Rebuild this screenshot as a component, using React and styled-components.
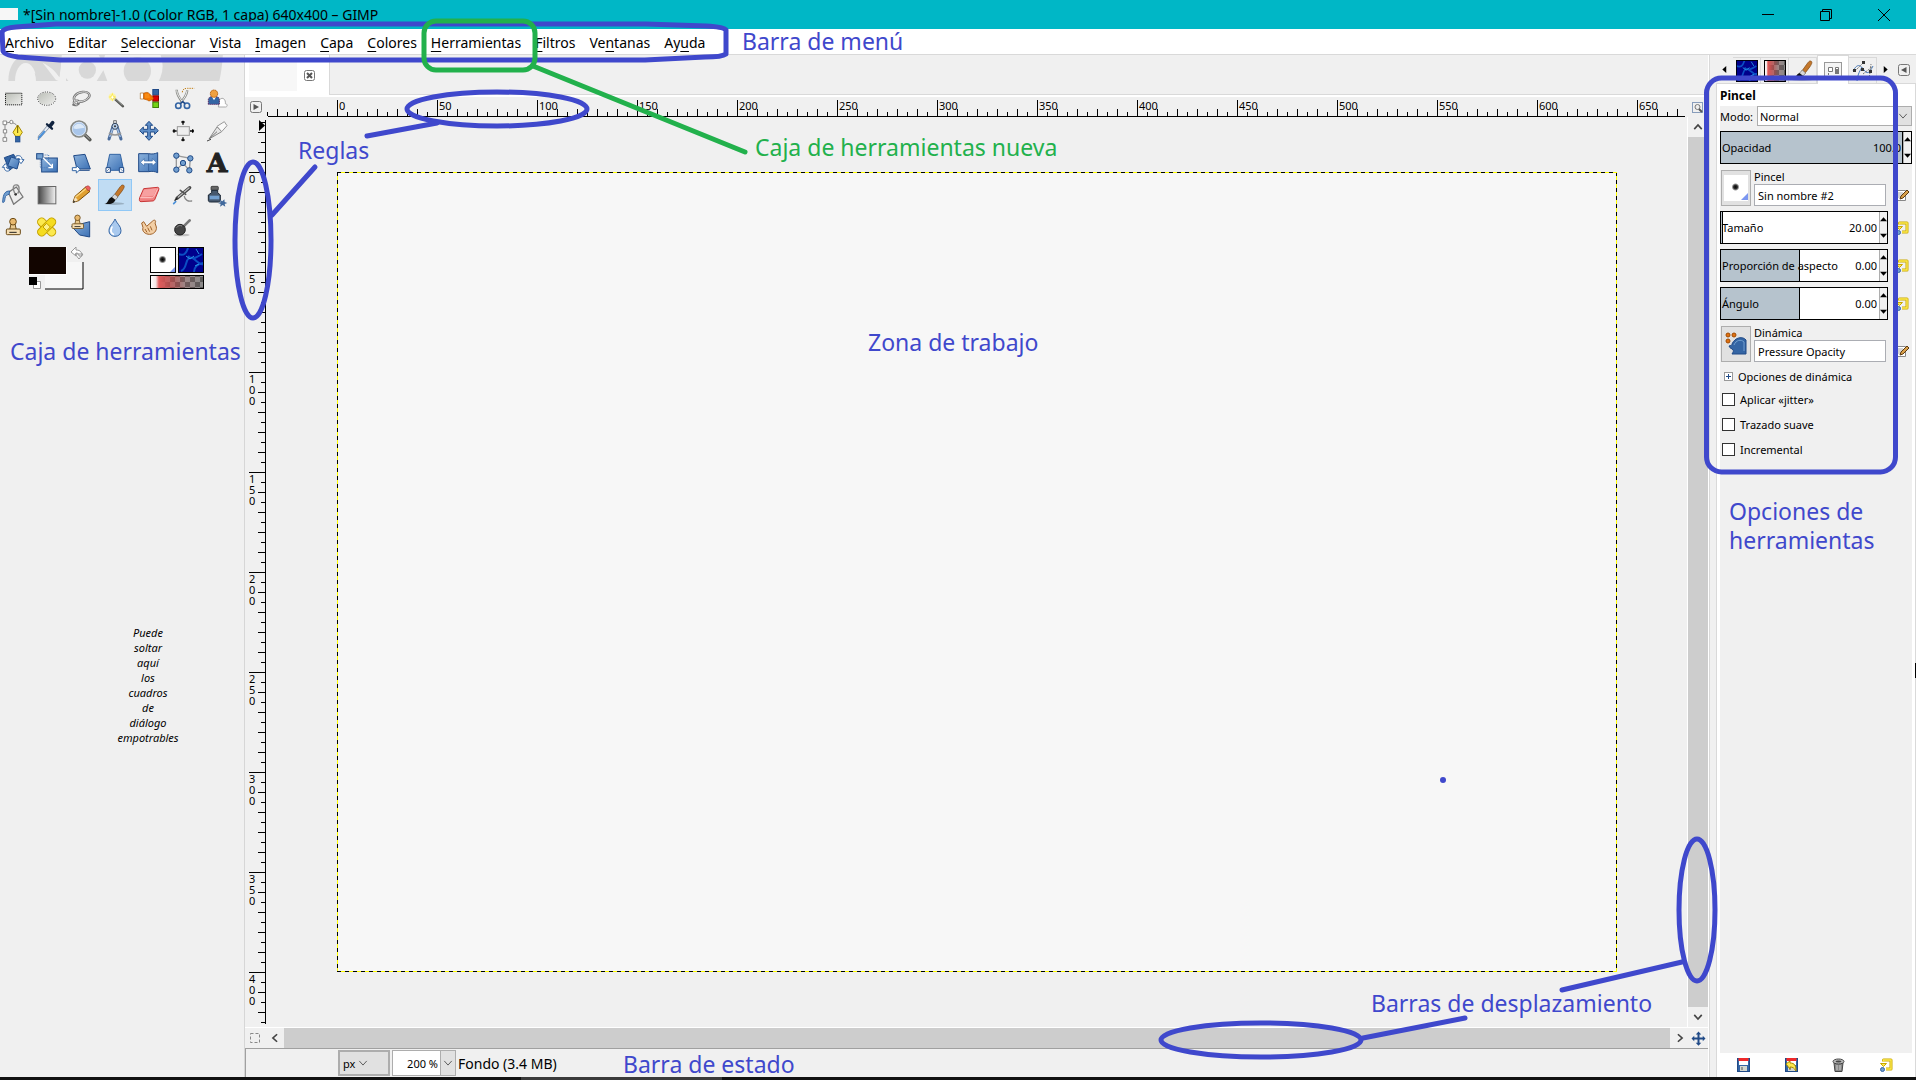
import React from "react";
import styled, { createGlobalStyle, css } from "styled-components";

const GlobalStyle = createGlobalStyle`
  *, *::before, *::after { box-sizing: border-box; }
  body { margin: 0; background: #f0f0f0; }
  button, input, select { font: inherit; color: inherit; margin: 0; border-radius: 0; }
`;

const ui = `"Noto Sans", "Open Sans", sans-serif`;
const blue = "#3f48cc";
const green = "#22b14c";

const Page = styled.div`
  position: relative;
  display: flex;
  flex-direction: column;
  min-height: 100vh;
  overflow: hidden;
  background: #f0f0f0;
  color: #000;
  font: 11px/15px ${ui};
`;

const plainButton = css`
  display: flex;
  align-items: center;
  justify-content: center;
  padding: 0;
  border: 0;
  background: none;
`;

/* ---------- title and menu ---------- */

const TitleBar = styled.header`
  display: flex;
  align-items: center;
  height: 29px;
  padding-right: 3px;
  background: #00b7c6;
`;
const TitleThumb = styled.span`
  align-self: flex-end;
  width: 18px;
  height: 12px;
  margin: 0 5px 9px 0;
  background: #f7f7f7;
`;
const TitleText = styled.h1`
  flex: 1;
  margin: 0;
  font-size: 14px;
  line-height: 20px;
  font-weight: 400;
`;
const WindowButton = styled.button`
  ${plainButton}
  width: 58px;
  height: 29px;
`;
const MenuBar = styled.nav`
  display: flex;
  height: 26px;
  background: #fff;
  border-bottom: 1px solid #d9d9d9;
`;
const MenuButton = styled.button`
  ${plainButton}
  padding: 2px 7px 0 7px;
  font-size: 14px;
  line-height: 20px;
  &:first-child { padding-left: 5px; }
  u { text-underline-offset: 3px; text-decoration-thickness: 1px; text-decoration-skip-ink: none; }
`;

/* ---------- columns ---------- */

const Main = styled.main`
  flex: 1;
  display: grid;
  grid-template-columns: 245px minmax(0, 1fr) 208px;
`;

const Toolbox = styled.aside`
  display: flex;
  flex-direction: column;
  border-right: 1px solid #d6d6d6;
  svg { display: block; }
`;
const ToolGrid = styled.div`
  display: grid;
  grid-template-columns: repeat(7, 34px);
  grid-auto-rows: 32px;
  margin: 2px 0 4px -4px;
`;
const ToolButton = styled.button`
  ${plainButton}
  border: 1px solid ${(p) => (p.$active ? "#90c8f6" : "transparent")};
  background: ${(p) => (p.$active ? "#c0dcf3" : "none")};
  svg { overflow: visible; }
`;
const SwatchRow = styled.div`
  display: flex;
  justify-content: space-between;
  padding: 0 40px 0 29px;
`;
const DropHint = styled.p`
  align-self: center;
  margin: 334px 0 0 52px;
  text-align: center;
  font-style: italic;
  white-space: pre-line;
`;

/* ---------- image window ---------- */

const Editor = styled.section`
  display: flex;
  flex-direction: column;
`;
const TabStrip = styled.div`
  display: flex;
  height: 42px;
  border-bottom: 2px solid #fff;
`;
const ImageTab = styled.div`
  display: flex;
  align-items: flex-start;
  gap: 7px;
  width: 85px;
  padding: 7px 0 0 4px;
  background: #fff;
  border-right: 1px solid #d9d9d9;
`;
const TabThumb = styled.span`
  width: 48px;
  height: 29px;
  background: #f7f7f7;
`;
const TabClose = styled.button`
  ${plainButton}
  margin-top: 8px;
`;
const TabRest = styled.div`
  flex: 1;
  border-bottom: 1px solid #d9d9d9;
`;
const RulerRow = styled.div`
  display: grid;
  grid-template-columns: 21px minmax(0, 1fr) 21px;
  height: 20px;
`;
const CornerButton = styled.button`
  ${plainButton}
`;
const Ruler = styled.svg`
  display: block;
  width: 100%;
  height: 100%;
  overflow: hidden;
  font: 11px ${ui};
`;
const Body = styled.div`
  flex: 1;
  display: grid;
  grid-template-columns: 21px minmax(0, 1fr) 21px;
`;
const Viewport = styled.div`
  overflow: hidden;
  padding: 55px 0 55px 71px;
`;
const Canvas = styled.div`
  width: 1280px;
  height: 800px;
  background-color: #f7f7f7;
  background-image:
    repeating-linear-gradient(90deg, #000 0 4px, #ff0 4px 8px),
    repeating-linear-gradient(90deg, #000 0 4px, #ff0 4px 8px),
    repeating-linear-gradient(180deg, #000 0 4px, #ff0 4px 8px),
    repeating-linear-gradient(180deg, #000 0 4px, #ff0 4px 8px);
  background-size: 100% 1px, 100% 1px, 1px 100%, 1px 100%;
  background-position: 0 0, 0 100%, 0 0, 100% 0;
  background-repeat: no-repeat;
`;
const VScroll = styled.div`
  display: flex;
  flex-direction: column;
  border-left: 1px solid #fff;
`;
const HScroll = styled.div`
  display: flex;
  height: 21px;
  border-top: 1px solid #fff;
`;
const ScrollThumb = styled.div`
  flex: 1;
  background: #cdcdcd;
`;
const ScrollButton = styled.button`
  ${plainButton}
  min-width: 19px;
  min-height: 20px;
  &:first-child { min-width: 20px; }
`;
const StatusBar = styled.footer`
  display: flex;
  align-items: center;
  gap: 2px;
  height: 29px;
  padding-left: 92px;
  border: solid #a0a0a0;
  border-width: 1px 0 0 1px;
`;
const StatusText = styled.span`
  padding-top: 1px;
  font-size: 14px;
  line-height: 20px;
`;
const BottomEdge = styled.div`
  height: 3px;
  background: linear-gradient(90deg, #111 521px, #3a3a3a 521px 722px, #111 722px);
`;

/* ---------- form parts ---------- */

const Combo = styled.span`
  display: grid;
  grid-template-columns: minmax(0, 1fr) ${(p) => (p.$flat ? "30px" : p.$cell)};
  width: ${(p) => p.$width};
  flex: ${(p) => (p.$width ? "none" : 1)};
  height: ${(p) => p.$height};
  border: ${(p) => (p.$thick ? 2 : 1)}px solid #adadad;
  background: ${(p) => (p.$flat ? "#e1e1e1" : "#fff")};
  select {
    grid-area: 1 / 1 / 2 / 3;
    width: 100%;
    appearance: none;
    border: 0;
    padding: 0 ${(p) => (p.$right ? "17px" : "2px")} 0 ${(p) => (p.$flat ? "3px" : "2px")};
    background: none;
    text-align: ${(p) => (p.$right ? "right" : "left")};
    text-align-last: ${(p) => (p.$right ? "right" : "left")};
  }
`;
const ComboArrow = styled.span`
  grid-area: 1 / 2;
  display: flex;
  align-items: center;
  justify-content: ${(p) => (p.$flat ? "flex-start" : "center")};
  background: #e1e1e1;
  border-left: ${(p) => (p.$flat ? 0 : 1)}px solid #adadad;
  pointer-events: none;
`;
const Entry = styled.input`
  width: 100%;
  height: 22px;
  padding: 0 3px;
  border: 1px solid #abadb3;
  background: #fff;
`;

/* ---------- dock ---------- */

const Dock = styled.aside`
  display: grid;
  grid-template-columns: 8px minmax(0, 1fr);
`;
const Seam = styled.div`
  border-left: 1px solid #fff;
  box-shadow: inset 1px 0 #d9d9d9;
`;
const DockBook = styled.div`
  display: flex;
  flex-direction: column;
`;
const DockTabs = styled.div`
  display: flex;
  height: 29px;
`;
const DockTab = styled.button`
  ${plainButton}
  width: ${(p) => (p.$active ? 32 : 28)}px;
  margin-top: ${(p) => (p.$active ? 0 : 2)}px;
  border: solid #d9d9d9;
  border-width: 1px 1px ${(p) => (p.$active ? 0 : 1)}px ${(p) => (p.$active ? 1 : 0)}px;
  background: ${(p) => (p.$active ? "#fff" : "#f0f0f0")};
`;
const DockArrow = styled.button`
  ${plainButton}
  width: 17px;
  padding-top: 1px;
  border-bottom: 1px solid #d9d9d9;
`;
const DockMenuButton = styled(DockArrow)`
  flex: 1;
  justify-content: flex-end;
  padding-right: 6px;
`;
const DockPage = styled.div`
  flex: 1;
  display: flex;
  flex-direction: column;
  padding: 0 3px;
  background: #fff;
  border: solid #d9d9d9;
  border-width: 0 1px;
`;
const DockTitle = styled.h2`
  margin: 0;
  padding-top: 1px;
  font-size: 12px;
  line-height: 21px;
  height: 22px;
`;
const Options = styled.form`
  flex: 1;
  display: flex;
  flex-direction: column;
  gap: 5px;
  background: #f0f0f0;
`;
const ModeRow = styled.div`
  display: flex;
  align-items: center;
  gap: 4px;
`;
const OptionRow = styled.div`
  display: flex;
  align-items: ${(p) => (p.$end ? "flex-end" : "center")};
`;
const SideButton = styled.button`
  ${plainButton}
  width: 24px;
  height: 22px;
  padding-left: 4px;
`;
const Scale = styled.div`
  flex: 1;
  display: flex;
  align-items: center;
  min-width: 0;
  height: 33px;
  padding-left: 1px;
  border: 1px solid #000;
  background: linear-gradient(90deg, #b6c3cd ${(p) => p.$fill}, #000 ${(p) => p.$fill}, #000 calc(${(p) => p.$fill} + 1px), #fff calc(${(p) => p.$fill} + 1px));
  label { flex: 1; white-space: nowrap; }
  input {
    width: 38px;
    border: 0;
    padding: 0 2px 0 0;
    background: none;
    text-align: right;
  }
`;
const Spinner = styled.span`
  display: flex;
  flex-direction: column;
  justify-content: space-between;
  align-self: stretch;
  width: 8px;
  background: #f0f0f0;
  border-left: 1px solid #adadad;
`;
const SpinButton = styled.button`
  ${plainButton}
  height: 15px;
`;
const ResourceButton = styled.button`
  ${plainButton}
  width: 30px;
  height: 36px;
  margin: 0 3px 0 1px;
  border: 1px solid #adadad;
  background: #e1e1e1;
`;
const ResourceField = styled.label`
  flex: 1;
  min-width: 0;
  padding-right: 2px;
  span { display: block; }
`;
const Expander = styled.button`
  ${plainButton}
  justify-content: flex-start;
  gap: 5px;
  height: 18px;
  padding-left: 4px;
`;
const Checks = styled.div`
  display: flex;
  flex-direction: column;
  margin-top: -3px;
`;
const Check = styled.label`
  display: flex;
  align-items: center;
  gap: 5px;
  height: 25px;
  padding-left: 2px;
  input {
    width: 13px;
    height: 13px;
    appearance: none;
    border: 1px solid #333;
    background: #fff;
  }
`;
const DockActions = styled.div`
  display: grid;
  grid-template-columns: repeat(4, 1fr);
  height: 24px;
  padding-right: 2px;
`;
const ActionButton = styled.button`
  ${plainButton}
`;

/* ---------- annotations ---------- */

const Markup = styled.svg`
  position: absolute;
  inset: 0;
  width: 100%;
  height: 100%;
  pointer-events: none;
`;
const Note = styled.p`
  position: absolute;
  left: ${(p) => p.$x}px;
  top: ${(p) => p.$y}px;
  margin: 0;
  font-size: 23px;
  line-height: 29px;
  color: ${(p) => p.$color || blue};
  white-space: pre;
`;

const HiddenDefs = styled.svg`
  position: absolute;
`;

/* ---------- tool drawings, 72-unit box ---------- */

const B = "#3465a4";
const BL = "#729fcf";
const BD = "#204a87";

const Defs = () => (
  <HiddenDefs width="0" height="0" aria-hidden="true">
    <defs>
      <linearGradient id="blueFace" x1="0" y1="0" x2="1" y2="1">
        <stop offset="0" stopColor="#8db3dd" />
        <stop offset="1" stopColor="#3b70b4" />
      </linearGradient>
      <linearGradient id="greyFace" x1="0" y1="0" x2="1" y2="1">
        <stop offset="0" stopColor="#babdb6" />
        <stop offset="1" stopColor="#eeeeec" />
      </linearGradient>
      <linearGradient id="blend" x1="0" y1="0" x2="1" y2="0">
        <stop offset="0" stopColor="#444" />
        <stop offset="1" stopColor="#f4f4f4" />
      </linearGradient>
      <linearGradient id="redFade" x1="0" y1="0" x2="1" y2="0">
        <stop offset="0" stopColor="#fff" />
        <stop offset="0.1" stopColor="#f4e4e4" />
        <stop offset="0.16" stopColor="#e05a5a" />
        <stop offset="0.65" stopColor="#c02020" stopOpacity="0.15" />
        <stop offset="1" stopColor="#000" stopOpacity="0.1" />
      </linearGradient>
      <radialGradient id="softDot">
        <stop offset="0" stopColor="#000" />
        <stop offset="0.5" stopColor="#333" />
        <stop offset="1" stopColor="#fff" />
      </radialGradient>
      <pattern id="checks" width="10" height="10" patternUnits="userSpaceOnUse">
        <rect width="10" height="10" fill="#999" />
        <path d="M0 0h5v5H0zM5 5h5v5H5z" fill="#666" />
      </pattern>
    </defs>
  </HiddenDefs>
);

const Stamp = () => (
  <g stroke="#6b4a16" strokeWidth="3" strokeLinejoin="round">
    <path d="M30 27l-4 17h20l-4-17z" fill="#e9c98f" />
    <circle cx="36" cy="20" r="10" fill="#e9b96e" />
    <rect x="16" y="42" width="42" height="17" rx="3" fill="#f5deb3" />
    <path d="M25 52h22" stroke="#222" />
  </g>
);

const BrushArt = () => (
  <g>
    <ellipse cx="34" cy="62" rx="30" ry="4" fill="#000" opacity=".2" />
    <path d="M60 6c6 2 4 8-2 17L42 44 33 37 48 16c5-7 8-11 12-10z" fill="#c4782c" stroke="#7a4510" strokeWidth="2" />
    <path d="M35 33l10 9-8 9-11-8z" fill="#d8d8d8" stroke="#666" strokeWidth="2" />
    <path d="M26 42l11 9c-4 12-18 13-30 12 9-4 8-17 19-21z" fill="#111" />
  </g>
);

const tools = [
  ["Selección rectangular", <rect x="13.5" y="18.5" width="49" height="35" fill="url(#greyFace)" stroke="#000" strokeWidth="3" strokeDasharray="3 3" />],
  ["Selección elíptica", <g strokeWidth="3"><ellipse cx="35" cy="35" rx="27" ry="20" fill="url(#greyFace)" stroke="#fff" /><ellipse cx="35" cy="35" rx="27" ry="20" fill="none" stroke="#222" strokeDasharray="3 4" /></g>],
  ["Selección libre", <g fill="none" strokeLinecap="round"><path d="M24 54c-8 0-12-8-7-11 5-4 14-2 13 4-1 5-10 9-17 6M17 42C9 31 22 17 40 15s27 8 18 18c-6 7-19 12-31 11" stroke="#777" strokeWidth="7" /><path d="M24 54c-8 0-12-8-7-11 5-4 14-2 13 4M17 42C9 31 22 17 40 15s27 8 18 18c-6 7-19 12-31 11" stroke="#ddd" strokeWidth="3" /></g>],
  ["Selección difusa", <g><path d="M31 32l29 26" stroke="#555753" strokeWidth="7" strokeLinecap="round" /><path d="M33 32l25 23" stroke="#aaa" strokeWidth="2" /><circle cx="28" cy="30" r="11" fill="#fff59a" opacity=".8" /><path d="M28 16l3 10 9 4-9 4-3 10-3-10-9-4 9-4z" fill="#fce94f" /><path d="M28 24l2 5 5 1-5 2-2 5-2-5-5-2 5-1z" fill="#fff" /></g>],
  ["Selección por color", <g strokeWidth="3"><rect x="47.5" y="7.5" width="17" height="16" fill={B} stroke={BD} /><rect x="47.5" y="26.5" width="17" height="16" fill="#e00000" stroke="#800" /><rect x="47.5" y="45.5" width="17" height="16" fill="#73d216" stroke="#3f8006" /><path d="M10 18h10v18H10z" fill="#fff" stroke="#a66a2a" strokeWidth="2" /><path d="M20 19c6-4 14-4 18 2l10 10c3 5-1 9-6 8-3 4-9 3-11 0L20 36z" fill="#f57900" stroke="#b35400" strokeWidth="2" /><path d="M24 24h12M24 30h14" stroke="#fcaf3e" strokeWidth="2" /></g>],
  ["Tijeras inteligentes", <g fill="none"><path d="M17 8c0 14 8 26 18 38M49 10C47 24 40 34 29 46" stroke="#888a85" strokeWidth="7" /><path d="M17 10c1 12 9 24 17 34M48 12c-2 12-8 22-17 32" stroke="#eee" strokeWidth="3" /><ellipse cx="22" cy="56" rx="8" ry="8" stroke={B} strokeWidth="5" /><ellipse cx="48" cy="56" rx="8" ry="8" stroke={B} strokeWidth="5" /><path d="M28 50l7-6 7 6" stroke={BD} strokeWidth="5" /><path d="M34 16c0-10 8-12 16-12h20" stroke="#c17d11" strokeWidth="3" strokeDasharray="4 3" /></g>],
  ["Selección del primer plano", <g strokeWidth="3"><path d="M40 60h22c6 0 6-10-1-10 2-12-8-22-17-12z" fill="#fff" stroke="#aaa" /><path d="M10 52V38c0-6 5-9 11-9h12c6 0 10 3 10 9v14z" fill={B} stroke="#5a2c66" strokeDasharray="4 2" /><path d="M21 30l6 10 6-10z" fill="#fff" stroke="none" /><circle cx="27" cy="20" r="11" fill="#f0a040" stroke="#b35400" strokeDasharray="4 2" /></g>],
  ["Rutas", <g><path d="M12 12v52M12 12c18-4 34 0 38 12" fill="none" stroke="#888" strokeWidth="3" /><path d="M6 6h11v11H6zM7 32h10v10H7zM6 56h11v11H6z" fill="#fff" stroke="#888" strokeWidth="3" /><circle cx="31" cy="9" r="5" fill="#fff" stroke="#888" strokeWidth="3" /><path d="M50 18L36 40l8 12h12l8-12z" fill="#fce94f" stroke="#a88a00" strokeWidth="3" /><path d="M50 20v22" stroke="#6b5900" strokeWidth="3" /><rect x="43" y="52" width="14" height="17" fill={B} stroke={BD} strokeWidth="2" /></g>],
  ["Recoge-color", <g strokeLinecap="round"><path d="M38 25L13 54" stroke="#7a8aa0" strokeWidth="10" /><path d="M38 25L14 53" stroke="#e8eef6" strokeWidth="6" /><path d="M28 38L14 54" stroke="#4a90d9" strokeWidth="6" /><path d="M36 16l15 13" stroke="#10233f" strokeWidth="7" /><path d="M46 20l7-9" stroke="#10233f" strokeWidth="11" /><path d="M10 56c-6 8 3 10 3 3z" fill="#4a90d9" /></g>],
  ["Ampliación", <g><path d="M48 48l15 14" stroke="#555753" strokeWidth="10" strokeLinecap="round" /><path d="M49 48l13 12" stroke="#bbb" strokeWidth="3" /><circle cx="30" cy="30" r="24" fill="#a9c6ea" stroke="#888a85" strokeWidth="5" /><circle cx="30" cy="30" r="20" fill="none" stroke="#e8eef6" strokeWidth="2" /><path d="M13 28c3-18 31-18 34 0-10-4-22 6-34 0z" fill="#dce9f7" /></g>],
  ["Medida", <g><path d="M30 22L18 60M42 22l12 38" stroke="#4a6c9c" strokeWidth="9" strokeLinecap="round" /><path d="M30 26L20 54M42 26l10 28" stroke="#a4c0e4" strokeWidth="4" /><path d="M18 42c10 8 26 8 36 0" fill="none" stroke="#999" strokeWidth="5" /><rect x="32" y="5" width="8" height="12" fill="#ccc" stroke="#555" strokeWidth="2" /><circle cx="36" cy="22" r="9" fill="#b8cfea" stroke="#3a4a60" strokeWidth="3" /><circle cx="36" cy="22" r="3" fill="#333" /></g>],
  ["Mover", <path d="M36 7l11 12h-7v12h13v-7l11 11-11 11v-7H40v13h7L36 64 25 52h7V39H19v7L8 35l11-11v7h13V19h-7z" fill="#5f8fc8" stroke={BD} strokeWidth="3" strokeLinejoin="round" />],
  ["Alineación", <g><rect x="19" y="23" width="36" height="26" fill="#eee" stroke="#999" strokeWidth="3" /><path d="M36 5v12M31 9h10M36 55v12M31 63h10M5 36h12M9 31v10M57 36h12M65 31v10" stroke="#000" strokeWidth="4" /></g>],
  ["Recorte", <g strokeLinejoin="round"><path d="M12 60L36 24l14 14z" fill="#e6e6e6" stroke="#888" strokeWidth="3" /><path d="M36 22L58 8l8 12-16 18z" fill="#fafafa" stroke="#999" strokeWidth="3" /><path d="M12 60l24-22" stroke="#777" strokeWidth="3" /><path d="M6 66l12-5" stroke="#444" strokeWidth="3" /></g>],
  ["Rotar", <g strokeLinejoin="round"><path d="M10 20l28-10 14 28-27 20z" fill={B} stroke={BD} strokeWidth="3" /><path d="M30 18l26 8-8 28-28-10z" fill="url(#blueFace)" stroke={BD} strokeWidth="3" /><path d="M44 16c12-6 20 2 19 10h6l-9 12-9-11h6c0-6-5-6-12-2zM26 58c-8 6-17 0-16-9H4l9-11 9 10h-6c0 4 3 6 7 4z" fill="#fff" stroke={B} strokeWidth="3" /></g>],
  ["Escalar", <g><rect x="20" y="21" width="47" height="42" fill="url(#blueFace)" stroke={BD} strokeWidth="3" /><rect x="5" y="8" width="19" height="16" fill={BL} stroke={BD} strokeWidth="3" /><path d="M16 26v24h25V12H26" fill="none" stroke="#4a7ab8" strokeWidth="3" strokeDasharray="3 3" /><path d="M24 20l28 28M52 38v12H40" fill="none" stroke="#fff" strokeWidth="4" /></g>],
  ["Inclinar", <g strokeLinejoin="round"><path d="M14 14l34-4 16 44H24z" fill="url(#blueFace)" stroke={BD} strokeWidth="3" /><path d="M22 58h40" stroke={BD} strokeWidth="3" /><path d="M10 50h12v-7l12 12-12 11v-7H10z" fill="#fff" stroke={B} strokeWidth="3" /></g>],
  ["Perspectiva", <g><path d="M20 10h32l10 48H10z" fill="url(#blueFace)" stroke={B} strokeWidth="3" /><path d="M9 50h13v14H9zM49 50h13v14H49z" fill="#fff" stroke={BD} strokeWidth="3" /><path d="M12 60l7-7M59 60l-7-7" stroke={BD} strokeWidth="2" /></g>],
  ["Voltear", <g><path d="M5 8h30c10 2 18 1 27-3v60c-9-4-17-5-27-3H5z" fill="url(#blueFace)" stroke={BD} strokeWidth="3" /><path d="M35 8v54" stroke={BD} strokeWidth="2" /><path d="M10 34l12-11v7h24v-7l12 11-12 11v-7H22v7z" fill="#fff" stroke={B} strokeWidth="2" /></g>],
  ["Transformación de jaula", <g fill={BL} stroke={BD} strokeWidth="3"><path d="M16 14l42 8-3 36-18-21-21 19z" fill="none" stroke="#999" strokeWidth="4" /><circle cx="16" cy="14" r="8" /><circle cx="58" cy="22" r="8" /><circle cx="36" cy="36" r="8" /><circle cx="16" cy="56" r="8" /><circle cx="55" cy="58" r="8" /></g>],
  ["Texto", <text x="36" y="64" textAnchor="middle" fontFamily="DejaVu Serif, serif" fontWeight="700" fontSize="80" fill="#222" stroke="#222" strokeWidth="3">A</text>],
  ["Relleno", <g strokeLinejoin="round"><path d="M22 28L46 12l20 30-28 22z" fill="#eee" stroke="#777" strokeWidth="4" /><circle cx="44" cy="34" r="4" fill="#333" /><path d="M42 32c-10-20-4-28 6-26s6 20 2 26" fill="none" stroke="#888" strokeWidth="4" /><path d="M26 24C14 24 6 30 5 58c5 2 6-4 7-12 1-9 6-10 12-12z" fill={BL} stroke={B} strokeWidth="3" /></g>],
  ["Degradado", <rect x="9.5" y="10.5" width="53" height="52" fill="url(#blend)" stroke="#666" strokeWidth="3" />],
  ["Lápiz", <g strokeLinejoin="round"><path d="M12 58l6-18 32-28 13 13-34 28z" fill="#e0a030" stroke="#7a4c08" strokeWidth="3" /><path d="M20 42l34-28" stroke="#fcd77f" strokeWidth="4" /><path d="M49 13l5-4c6-2 12 5 9 10l-5 5z" fill="#ef6060" stroke="#a03030" strokeWidth="2" /><path d="M18 41l9 11-14 6z" fill="#f7e3bd" /><path d="M12 59l2-7 5 5z" fill="#222" /></g>],
  ["Pincel", <BrushArt />],
  ["Goma de borrar", <g strokeLinejoin="round"><path d="M8 44L20 17l42-4c4 0 4 4 3 8L54 48c-2 5-4 6-9 6l-33 2c-5 0-6-5-4-12z" fill="#f08080" stroke="#c83737" strokeWidth="3" /><path d="M10 44h34c4 0 6-2 8-6l10-21" fill="none" stroke="#ffc8c8" strokeWidth="3" /><path d="M21 20l38-4-9 22-38 3z" fill="#f7a0a0" /></g>],
  ["Aerógrafo", <g strokeLinecap="round"><path d="M18 46L56 14" stroke="#444" strokeWidth="10" /><path d="M22 42L54 15" stroke="#bbb" strokeWidth="4" /><path d="M28 22l16 12" stroke="#555" strokeWidth="5" /><path d="M40 40c2 12 12 16 22 14" fill="none" stroke="#888" strokeWidth="4" /><path d="M17 47l-5 5" stroke="#222" strokeWidth="4" /><path d="M8 62l6-6" stroke="#4a90d9" strokeWidth="5" /></g>],
  ["Tinta", <g><rect x="18" y="10" width="22" height="12" rx="3" fill="#666" stroke="#222" strokeWidth="2" /><path d="M20 22h18v7l8 7v16c0 4-3 5-6 5H16c-5 0-6-3-6-6V36l10-7z" fill="#46586e" stroke="#1c2836" strokeWidth="3" /><rect x="14" y="38" width="29" height="11" fill={BL} /><path d="M44 50l8 5 6-6 1 8 8 3-8 3 2 8-8-5-8 5 2-8-8-3 8-2z" fill="#41699c" /></g>],
  ["Clonar", <Stamp />],
  ["Saneado", <g stroke="#c4a000" strokeWidth="3"><rect x="2" y="24" width="66" height="24" rx="11" fill="#fce94f" transform="rotate(45 35 36)" /><rect x="2" y="24" width="66" height="24" rx="11" fill="#f5dc20" transform="rotate(-45 35 36)" /><path d="M35 25l11 11-11 11-11-11z" fill="#fdf08a" /></g>],
  ["Clonado en perspectiva", <g><path d="M8 34l54-14v46l-30-6z" fill="url(#blueFace)" stroke={BD} strokeWidth="3" /><g transform="translate(-4 -8) scale(.82)"><Stamp /></g></g>],
  ["Desenfocar", <g><path d="M36 12c5 14 18 20 18 35 0 11-8 17-18 17s-18-6-18-17c0-15 13-21 18-35z" fill="#a9c9ee" stroke={B} strokeWidth="3" /><path d="M27 36c-6 12-4 18 4 22" stroke="#fff" strokeWidth="5" fill="none" strokeLinecap="round" /></g>],
  ["Emborronar", <g strokeLinejoin="round"><path d="M14 24l6-4 9 14 18-16c6-6 12 0 7 6l4 12c2 12-8 22-20 22-14 0-24-10-20-20z" fill="#f3cfa5" stroke="#a0622a" strokeWidth="3" /><path d="M24 42l6 10M32 38l6 12M40 34l5 12" stroke="#a0622a" strokeWidth="3" /></g>],
  ["Blanquear", <g><ellipse cx="32" cy="60" rx="24" ry="4" fill="#000" opacity=".2" /><path d="M34 38l22-22" stroke="#777" strokeWidth="8" strokeLinecap="round" /><circle cx="27" cy="44" r="16" fill="#444" stroke="#222" strokeWidth="3" /><path d="M17 38c4-7 10-8 16-5" stroke="#888" strokeWidth="3" fill="none" /></g>],
];

const Chevron = ({ size = 10, turn = 0, weight = 1, color = "#444" }) => (
  <svg width={size} height={size} viewBox="0 0 12 12">
    <path d="M1.5 3.5L6 8.5l4.5-5" fill="none" stroke={color} strokeWidth={weight} transform={`rotate(${turn} 6 6)`} />
  </svg>
);

const Triangle = ({ turn = 0, size = 8, color = "#000" }) => (
  <svg width={size} height={size} viewBox="0 0 8 8">
    <path d="M0 6l4-4.5L8 6z" fill={color} transform={`rotate(${turn} 4 4)`} />
  </svg>
);

const BoxedArrow = ({ left }) => (
  <svg width="12" height="12" viewBox="0 0 12 12">
    <rect x=".5" y=".5" width="11" height="11" rx="2" fill="none" stroke="#777" />
    <path d={left ? "M8.5 3v6L3 6z" : "M3.5 3v6L9 6z"} fill="#555" />
  </svg>
);

const Plasma = () => (
  <g>
    <rect width="26" height="26" fill="#00008c" />
    <g fill="none" stroke="#0b4fc4" strokeWidth="2">
      <path d="M0 7c6 2 8 0 10-6M10 9c4 4 8 2 14-2M3 24c6-2 4-10 8-13s10 8 14 6M16 25c0-6 4-8 9-9" />
    </g>
    <path d="M8 9l4 3 4-3M18 2l3 5M17 19l4-2" stroke="#2a9ae8" fill="none" />
    <rect x=".5" y=".5" width="25" height="25" fill="none" stroke="#000" />
  </g>
);

const ResetIcon = () => (
  <svg width="14" height="14" viewBox="0 0 14 14">
    <path d="M4.5 3.5V2h7.5v9H7" fill="none" stroke="#c9a800" strokeWidth="3" strokeLinejoin="round" />
    <path d="M4.5 3.5V2h7.5v9H7" fill="none" stroke="#fce94f" strokeWidth="1.4" />
    <path d="M1.5 5.500h6l-3 3z" fill="#fce94f" stroke="#c9a800" strokeLinejoin="round" />
    <circle cx="3.5" cy="11.5" r="2" fill={BL} stroke={B} />
  </svg>
);

const EditIcon = () => (
  <svg width="14" height="14" viewBox="0 0 14 14">
    <path d="M1.5 2.5h9v10h-9z" fill="#fff" stroke="#888" />
    <path d="M3 5h5M3 7h4M3 9h3" stroke="#aaa" />
    <path d="M5 11l1-3 6-6 2 2-6 6z" fill="#d9a04a" stroke="#5c3a10" />
  </svg>
);

const Floppy = ({ back }) => (
  <svg width="13" height="14" viewBox="0 0 13 14">
    <rect x=".5" y=".5" width="12" height="13" fill={B} stroke={BD} />
    <rect x="1.5" y="0" width="10" height="3" fill="#ef2929" />
    <rect x="2" y="3" width="9" height="4" fill="#fff" />
    <rect x="3" y="8" width="7" height="5" fill="#d3d7cf" />
    <path d="M5 9v3" stroke="#555" />
    {back && <path d="M1 6l4-3v2c5 0 6 3 6 8-2-3-3-4-6-4v2z" fill="#fce94f" stroke="#a88a00" />}
  </svg>
);

const Trash = () => (
  <svg width="13" height="14" viewBox="0 0 13 14">
    <path d="M2 5h9l-1 8.5H3z" fill="#888" stroke="#444" />
    <ellipse cx="6.5" cy="3.5" rx="5.5" ry="2.5" fill="#bbb" stroke="#444" />
    <ellipse cx="6.5" cy="3.5" rx="3" ry="1" fill="#444" />
    <path d="M5 7v5M8 7v5" stroke="#ccc" />
  </svg>
);

/* ---------- rulers ---------- */

const marks = (to) => {
  const list = [];
  for (let u = -35; u <= to; u += 5) list.push(u);
  return list;
};

const HorizontalRuler = () => (
  <Ruler aria-label="Regla horizontal">
    <path d={marks(670).map((u) => `M${71.5 + 2 * u} ${u % 50 === 0 ? 3 : u % 10 === 0 ? 12 : 15}V19`).join("")} stroke="#000" />
    <path d="M2 19.5H1419" stroke="#000" />
    {marks(670).filter((u) => u % 50 === 0).map((u) => (
      <text key={u} x={73 + 2 * u} y="13">{u}</text>
    ))}
  </Ruler>
);

const VerticalRuler = () => (
  <Ruler aria-label="Regla vertical">
    <path d={marks(425).filter((u) => u >= -25).map((u) => `M${u % 50 === 0 ? 4 : u % 10 === 0 ? 13 : 16} ${55.5 + 2 * u}H20`).join("")} stroke="#000" />
    <path d="M20.5 3V907" stroke="#000" />
    <path d="M14 3v11l6-5.5z" fill="#000" />
    {marks(425).filter((u) => u >= 0 && u % 50 === 0).map((u) =>
      String(u).split("").map((d, i) => (
        <text key={`${u}-${i}`} x="4" y={66 + 2 * u + 11 * i}>{d}</text>
      ))
    )}
  </Ruler>
);

const menus = [
  ["", "A", "rchivo"], ["", "E", "ditar"], ["", "S", "eleccionar"], ["", "V", "ista"],
  ["", "I", "magen"], ["", "C", "apa"], ["", "C", "olores"], ["", "H", "erramientas"],
  ["", "F", "iltros"], ["Ve", "n", "tanas"], ["Ay", "u", "da"],
];

const SpinScale = ({ id, label, value, fill }) => (
  <Scale $fill={fill}>
    <label htmlFor={id}>{label}</label>
    <input id={id} defaultValue={value} />
    <Spinner>
      <SpinButton type="button" aria-label="Aumentar"><Triangle size={7} /></SpinButton>
      <SpinButton type="button" aria-label="Disminuir"><Triangle size={7} turn={180} /></SpinButton>
    </Spinner>
  </Scale>
);

export default function App() {
  return (
    <Page>
      <GlobalStyle />
      <Defs />
      <TitleBar>
        <TitleThumb />
        <TitleText>*[Sin nombre]-1.0 (Color RGB, 1 capa) 640x400 – GIMP</TitleText>
        <WindowButton aria-label="Minimizar">
          <svg width="12" height="12"><path d="M0 5.5h12" stroke="#000" /></svg>
        </WindowButton>
        <WindowButton aria-label="Restaurar">
          <svg width="12" height="12"><path d="M.5 2.5h9v9h-9zM2.5 2V.5h9v9H10" fill="none" stroke="#000" /></svg>
        </WindowButton>
        <WindowButton aria-label="Cerrar">
          <svg width="12" height="12"><path d="M0 0l12 12M12 0L0 12" stroke="#000" /></svg>
        </WindowButton>
      </TitleBar>
      <MenuBar>
        {menus.map(([a, k, b]) => (
          <MenuButton key={k + b}><span>{a}<u>{k}</u>{b}</span></MenuButton>
        ))}
      </MenuBar>

      <Main>
        <Toolbox>
          <svg width="244" height="26" viewBox="0 15 732 78">
            <path d="M25 93C25 50 45 20 80 10H669q-3 48-11 83z" fill="#d8d8d8" />
            <ellipse cx="77" cy="93" rx="32" ry="54" fill="#f0f0f0" />
            <path d="M128 38c24 12 40 28 50 42 4-24 6-50 8-70h12v83h-28z" fill="#f0f0f0" />
            <path d="M128 34c24 12 42 34 50 48 4-20 5-50 5-72h-60z" fill="#d8d8d8" />
            <path d="M108 93q0-12-4-24l72 24z" fill="#d8d8d8" />
            <circle cx="252" cy="48" r="65" fill="#f0f0f0" />
            <circle cx="398" cy="48" r="90" fill="#f0f0f0" />
            <path d="M294 10h22l-8 28zM290 93h32l-12-32z" fill="#d8d8d8" />
            <circle cx="262" cy="60" r="26" fill="#d8d8d8" />
            <circle cx="412" cy="63" r="41" fill="#d8d8d8" />
          </svg>
          <ToolGrid>
            {tools.map(([name, art]) => (
              <ToolButton key={name} $active={name === "Pincel"} aria-label={name}>
                <svg width="24" height="24" viewBox="0 0 72 72">{art}</svg>
              </ToolButton>
            ))}
          </ToolGrid>
          <SwatchRow>
            <svg width="56" height="44">
              <rect x="16" y="15" width="38" height="27" fill="#f7f7f7" />
              <path d="M16 42h38V15" fill="none" stroke="#000" />
              <rect x="0" y="0" width="38" height="28" fill="#fff" />
              <rect x="0" y="0" width="37" height="27" fill="#120500" />
              <path d="M4.5 34.5h7v7h-7z" fill="#fff" stroke="#999" />
              <rect y="30" width="8" height="8" fill="#000" />
              <path d="M42 5l5-5v3c5 0 6 3 6 6h-3c0-2-1-3-3-3v3zM54 7l-4 5-4-5z" fill="#fff" stroke="#999" />
            </svg>
            <svg width="54" height="42">
              <rect x=".5" y=".5" width="25" height="25" fill="#fff" stroke="#000" />
              <circle cx="12.5" cy="12.5" r="4" fill="url(#softDot)" />
              <path d="M25 20v5h-5z" fill="#7b96f0" />
              <g transform="translate(28 0)"><Plasma /></g>
              <rect x=".5" y="28.5" width="53" height="13" fill="url(#checks)" />
              <rect x=".5" y="28.5" width="53" height="13" fill="url(#redFade)" stroke="#000" />
            </svg>
          </SwatchRow>
          <DropHint>{"Puede\nsoltar\naquí\nlos\ncuadros\nde\ndiálogo\nempotrables"}</DropHint>
        </Toolbox>

        <Editor>
          <TabStrip>
            <ImageTab>
              <TabThumb />
              <TabClose aria-label="Cerrar imagen">
                <svg width="11" height="11">
                  <rect x=".5" y=".5" width="10" height="10" rx="2" fill="none" stroke="#777" />
                  <path d="M3 3l5 5M8 3L3 8" stroke="#555" strokeWidth="2" />
                </svg>
              </TabClose>
            </ImageTab>
            <TabRest />
          </TabStrip>
          <RulerRow>
            <CornerButton aria-label="Menú de la imagen"><BoxedArrow /></CornerButton>
            <HorizontalRuler />
            <CornerButton aria-label="Ampliar con la ventana">
              <svg width="11" height="11">
                <rect x=".5" y=".5" width="10" height="10" fill="none" stroke={BD} strokeDasharray="1 1" />
                <circle cx="5.5" cy="5" r="2.5" fill="#eee" stroke="#777" />
                <path d="M7 7l3 3" stroke="#555" strokeWidth="2" />
              </svg>
            </CornerButton>
          </RulerRow>
          <Body>
            <VerticalRuler />
            <Viewport><Canvas /></Viewport>
            <VScroll>
              <ScrollButton aria-label="Arriba"><Chevron turn={180} weight={2} /></ScrollButton>
              <ScrollThumb />
              <ScrollButton aria-label="Abajo"><Chevron weight={2} /></ScrollButton>
            </VScroll>
          </Body>
          <HScroll>
            <ScrollButton aria-label="Máscara rápida">
              <svg width="10" height="10"><rect x=".5" y=".5" width="9" height="9" fill="none" stroke="#888" strokeDasharray="3 2" /></svg>
            </ScrollButton>
            <ScrollButton aria-label="Izquierda"><Chevron turn={90} weight={2} /></ScrollButton>
            <ScrollThumb />
            <ScrollButton aria-label="Derecha"><Chevron turn={-90} weight={2} /></ScrollButton>
            <ScrollButton aria-label="Navegar">
              <svg width="15" height="15" viewBox="6 5 60 60">
                <path d="M36 7l11 12h-7v12h13v-7l11 11-11 11v-7H40v13h7L36 64 25 52h7V39H19v7L8 35l11-11v7h13V19h-7z" fill={BD} />
              </svg>
            </ScrollButton>
          </HScroll>
          <StatusBar>
            <Combo $width="52px" $height="26px" $thick $flat>
              <select aria-label="Unidad" defaultValue="px"><option>px</option></select>
              <ComboArrow $flat><Chevron /></ComboArrow>
            </Combo>
            <Combo $width="64px" $height="26px" $cell="15px" $right>
              <select aria-label="Ampliación" defaultValue="200 %"><option>200 %</option></select>
              <ComboArrow><Chevron /></ComboArrow>
            </Combo>
            <StatusText>Fondo (3.4 MB)</StatusText>
          </StatusBar>
        </Editor>

        <Dock>
          <Seam />
          <DockBook>
            <DockTabs>
              <DockArrow aria-label="Pestañas anteriores"><Triangle turn={-90} size={7} /></DockArrow>
              <DockTab aria-label="Patrones"><svg width="22" height="22" viewBox="0 0 26 26"><Plasma /></svg></DockTab>
              <DockTab aria-label="Degradados">
                <svg width="22" height="22">
                  <rect x=".5" y=".5" width="21" height="21" fill="url(#checks)" />
                  <rect x=".5" y=".5" width="21" height="21" fill="url(#redFade)" stroke="#000" />
                </svg>
              </DockTab>
              <DockTab aria-label="Pinceles"><svg width="22" height="24" viewBox="4 0 66 72"><BrushArt /></svg></DockTab>
              <DockTab $active aria-label="Opciones de herramienta">
                <svg width="18" height="16">
                  <rect x=".5" y=".5" width="17" height="15" fill="#f4f4f4" stroke="#999" />
                  <path d="M4.5 5.5h4v4h-4zM11.5 5.5h3v6h-3zM4.5 11v2" fill="#fff" stroke="#777" />
                  <rect x="11" y="7" width="4" height="5" fill="#777" />
                </svg>
              </DockTab>
              <DockTab aria-label="Dinámica de la pintura">
                <svg width="22" height="22">
                  <path d="M1 11C6 2 9 6 12 10s5 4 9-4M5 21c1-8 3-10 5-14" fill="none" stroke="#4a7ab8" />
                  <path d="M3 11l9-9M11 14l9-7M17 20l2-16" stroke="#777" strokeDasharray="2 1" fill="none" />
                  <path d="M1 9h3v3H1zM10 1h3v3h-3zM9 8h3v3H9zM17 10h3v3h-3z" fill="#333" />
                </svg>
              </DockTab>
              <DockArrow aria-label="Pestañas siguientes"><Triangle turn={90} size={7} /></DockArrow>
              <DockMenuButton aria-label="Menú de pestaña"><BoxedArrow left /></DockMenuButton>
            </DockTabs>
            <DockPage>
              <DockTitle>Pincel</DockTitle>
              <Options>
                <ModeRow>
                  <label htmlFor="modo">Modo:</label>
                  <Combo $height="20px" $cell="18px">
                    <select id="modo" defaultValue="Normal"><option>Normal</option></select>
                    <ComboArrow><Chevron /></ComboArrow>
                  </Combo>
                </ModeRow>
                <OptionRow><SpinScale id="opacidad" label="Opacidad" value="100.0" fill="calc(100% - 9px)" /></OptionRow>
                <OptionRow $end>
                  <ResourceButton type="button" aria-label="Elegir pincel">
                    <svg width="24" height="26">
                      <rect width="24" height="26" fill="#fff" />
                      <circle cx="11.5" cy="12" r="4" fill="url(#softDot)" />
                      <path d="M24 18v7h-7z" fill="#7b96f0" />
                    </svg>
                  </ResourceButton>
                  <ResourceField><span>Pincel</span><Entry defaultValue="Sin nombre #2" /></ResourceField>
                  <SideButton type="button" aria-label="Editar pincel"><EditIcon /></SideButton>
                </OptionRow>
                <OptionRow>
                  <SpinScale id="tamano" label="Tamaño" value="20.00" fill="1px" />
                  <SideButton type="button" aria-label="Restablecer tamaño"><ResetIcon /></SideButton>
                </OptionRow>
                <OptionRow>
                  <SpinScale id="proporcion" label="Proporción de aspecto" value="0.00" fill="78px" />
                  <SideButton type="button" aria-label="Restablecer proporción"><ResetIcon /></SideButton>
                </OptionRow>
                <OptionRow>
                  <SpinScale id="angulo" label="Ángulo" value="0.00" fill="78px" />
                  <SideButton type="button" aria-label="Restablecer ángulo"><ResetIcon /></SideButton>
                </OptionRow>
                <OptionRow $end>
                  <ResourceButton type="button" aria-label="Elegir dinámica">
                    <svg width="24" height="26">
                      <path d="M5 15c3-1 3-1 3-2 3-7 11-8 14-4v14H8c1-2 2-3 1-4-1-2-3-1-4-4z" fill={B} stroke={BD} />
                      <path d="M10 14c2-5 7-6 10-3v9" fill="none" stroke={BL} />
                      <g fill="#e07010" stroke="#a04a00"><circle cx="4" cy="4" r="2" /><circle cx="10" cy="4" r="2" /><circle cx="4" cy="10" r="2" /></g>
                    </svg>
                  </ResourceButton>
                  <ResourceField><span>Dinámica</span><Entry defaultValue="Pressure Opacity" /></ResourceField>
                  <SideButton type="button" aria-label="Editar dinámica"><EditIcon /></SideButton>
                </OptionRow>
                <Expander type="button">
                  <svg width="9" height="9"><rect x=".5" y=".5" width="8" height="8" fill="#fff" stroke="#999" /><path d="M2 4.5h5M4.5 2v5" stroke={BD} /></svg>
                  Opciones de dinámica
                </Expander>
                <Checks>
                  <Check><input type="checkbox" />Aplicar «jitter»</Check>
                  <Check><input type="checkbox" />Trazado suave</Check>
                  <Check><input type="checkbox" />Incremental</Check>
                </Checks>
              </Options>
              <DockActions>
                <ActionButton aria-label="Guardar ajustes"><Floppy /></ActionButton>
                <ActionButton aria-label="Restaurar ajustes"><Floppy back /></ActionButton>
                <ActionButton aria-label="Borrar ajustes"><Trash /></ActionButton>
                <ActionButton aria-label="Restablecer"><ResetIcon /></ActionButton>
              </DockActions>
            </DockPage>
          </DockBook>
        </Dock>
      </Main>
      <BottomEdge />

      <Markup aria-hidden="true">
        <g fill="none" stroke={blue} strokeWidth="5" strokeLinecap="round" strokeLinejoin="round">
          <path d="M2 32q2-4 14-5l40-3h590l60 2q18 1 20 4v24q-4 3-21 3l-60 3H60l-42-3Q4 55 3 51z" />
          <ellipse cx="497" cy="109" rx="90" ry="17" />
          <path d="M367 136l70-13M315 167l-43 48" />
          <ellipse cx="253" cy="240" rx="18" ry="78" />
          <rect x="1706.5" y="78" width="189" height="394" rx="15" />
          <ellipse cx="1697" cy="910" rx="18" ry="71" />
          <path d="M1562 990l120-28M1363 1038l102-20" />
          <ellipse cx="1261" cy="1040" rx="100" ry="17" />
          <circle cx="1443" cy="780" r="3" fill={blue} stroke="none" />
        </g>
        <g fill="none" stroke={green} strokeWidth="5" strokeLinecap="round">
          <rect x="424" y="21" width="111" height="49" rx="12" />
          <path d="M533 66l212 86" />
        </g>
        <path d="M1915.5 663v15" stroke="#000" />
      </Markup>
      <Note $x={742} $y={27}>Barra de menú</Note>
      <Note $x={298} $y={136}>Reglas</Note>
      <Note $x={755} $y={133} $color={green}>Caja de herramientas nueva</Note>
      <Note $x={868} $y={328}>Zona de trabajo</Note>
      <Note $x={10} $y={337}>Caja de herramientas</Note>
      <Note $x={1729} $y={497}>{"Opciones de\nherramientas"}</Note>
      <Note $x={1371} $y={989}>Barras de desplazamiento</Note>
      <Note $x={623} $y={1050}>Barra de estado</Note>
    </Page>
  );
}
